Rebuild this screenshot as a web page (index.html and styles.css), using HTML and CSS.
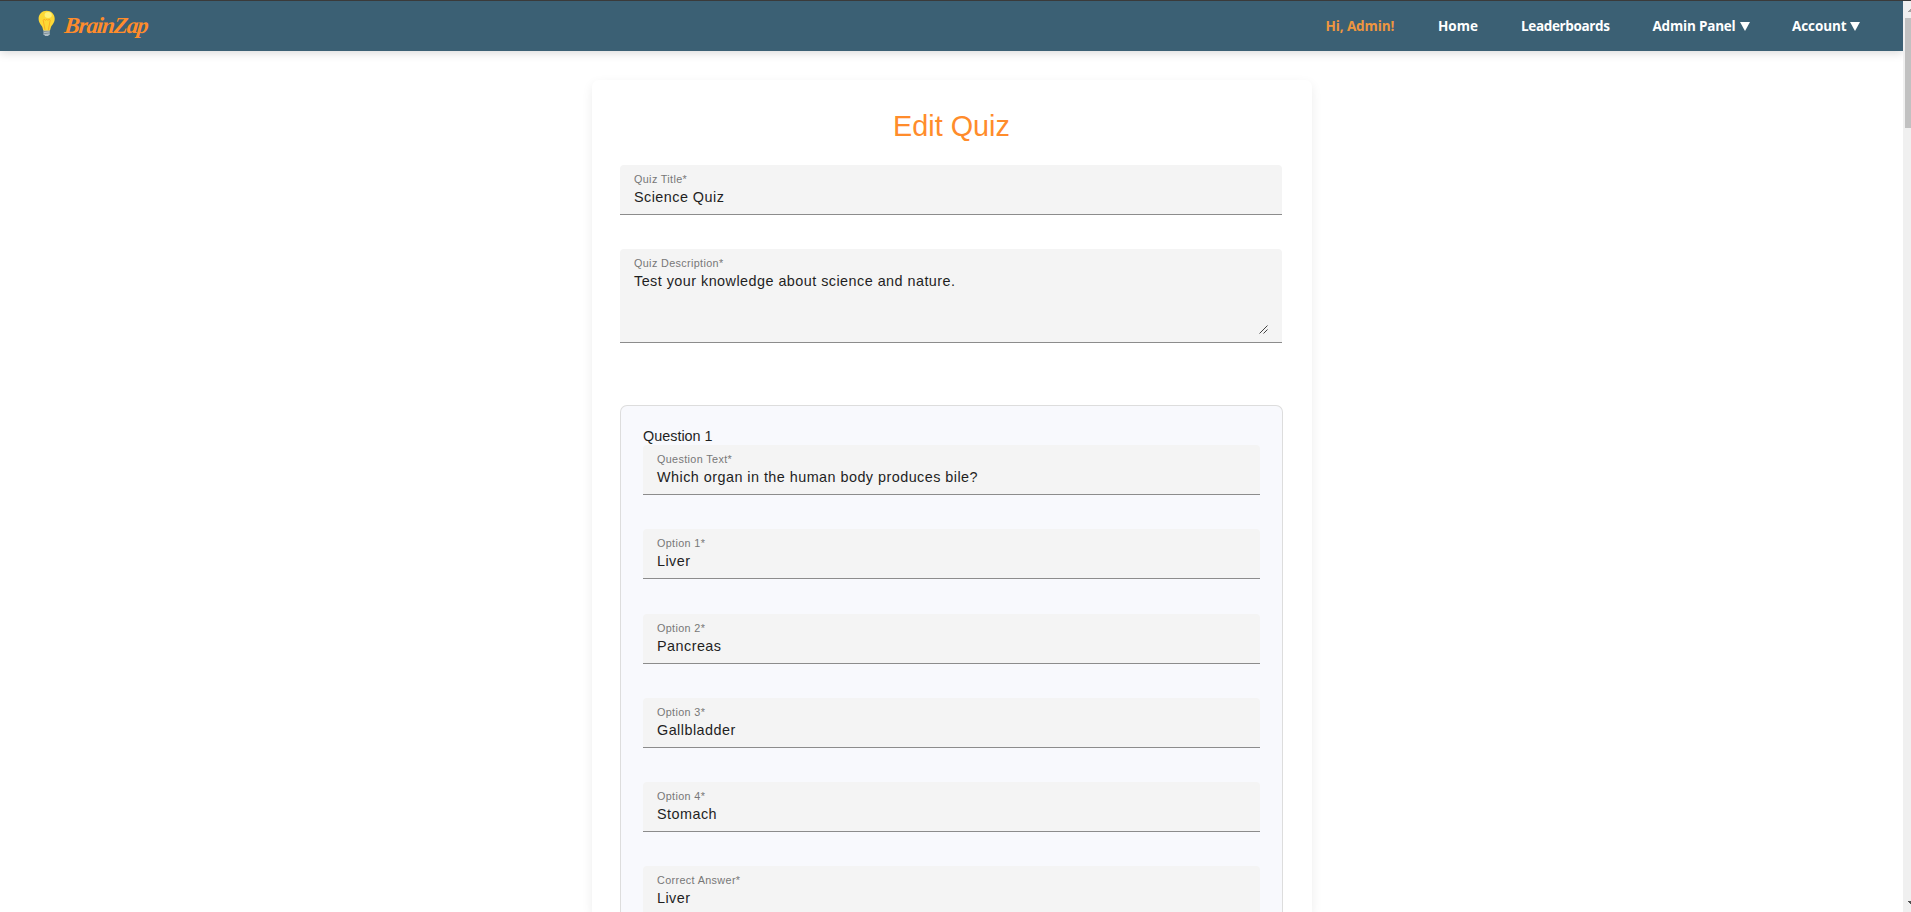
FILE: index.html
```html
<!DOCTYPE html>
<html lang="en">
<head>
<meta charset="utf-8">
<title>BrainZap</title>
<link rel="stylesheet" href="styles.css">
</head>
<body>
<header class="navbar">
  <a class="brand">
    <svg class="bulb" width="18" height="27" viewBox="0 0 18 27">
      <path d="M5.5 20h6.2v4.2l-1.6 1.8H7.2l-1.7-1.8z" fill="#b0bec5"/>
      <path d="M5.5 21.6l6.2-.8M5.5 23.8l6.2-.9" stroke="#75858d" stroke-width=".8"/>
      <path d="M8.6.8C4.100.8.600 4.200.600 8.700c0 4.300 2.500 5.800 3.600 8 .7 1.400.7 3.800 1.600 3.900h5.700c.9-.1.900-2.500 1.600-3.900 1.100-2.200 3.600-3.700 3.600-8C16.700 4.200 13.100.8 8.600.8z" fill="#fdd835"/>
      <path d="M7 19.800L5.200 10.200c.5-1.200 1.700-1 2.200.2.500-1.200 2-1.200 2.500 0 .5-1.200 1.800-1.400 2.300-.2L10.400 19.800" fill="none" stroke="#f9a820" stroke-width=".9"/>
      <ellipse cx="10.200" cy="5" rx="3.600" ry="3" fill="#fff27a"/>
    </svg>
    <span class="brand-name">BrainZap</span>
  </a>
  <nav class="links">
    <a class="link greeting">Hi, Admin!</a>
    <a class="link home">Home</a>
    <a class="link boards">Leaderboards</a>
    <a class="link admin">Admin Panel<i class="caret"></i></a>
    <a class="link account">Account<i class="caret"></i></a>
  </nav>
</header>
<div class="scrollbar">
  <svg width="3" height="3" viewBox="0 0 3 3"><path d="M2 0h1v3H0V2h1V1h1z" fill="#a3a3a3"/></svg>
  <div class="thumb"></div>
  <svg class="down" width="3" height="3" viewBox="0 0 3 3"><path d="M0 0h3v3H2V2H1V1H0z" fill="#505050"/></svg>
</div>
<main class="card">
  <h1>Edit Quiz</h1>
  <div class="field"><label>Quiz Title*</label><div class="value">Science Quiz</div></div>
  <div class="field area"><label>Quiz Description*</label><div class="value">Test your knowledge about science and nature.</div>
    <svg class="grip" width="9" height="9" viewBox="0 0 9 9"><path d="M.5 8.500l8-8M4.500 8.500l4-4" stroke="#444" stroke-width="1"/></svg>
  </div>
  <section class="question">
    <h2>Question 1</h2>
    <div class="field"><label>Question Text*</label><div class="value">Which organ in the human body produces bile?</div></div>
    <div class="field second"><label>Option 1*</label><div class="value">Liver</div></div>
    <div class="field"><label>Option 2*</label><div class="value">Pancreas</div></div>
    <div class="field"><label>Option 3*</label><div class="value">Gallbladder</div></div>
    <div class="field"><label>Option 4*</label><div class="value">Stomach</div></div>
    <div class="field last"><label>Correct Answer*</label><div class="value">Liver</div></div>
  </section>
</main>
</body>
</html>
```
FILE: styles.css
```css
* { box-sizing: border-box; }
html { height: 100%; overflow: hidden; }
body {
  margin: 0;
  height: 100vh;
  overflow: hidden;
  background: #fff;
  color: #1f1f1f;
  font-family: Arial, "Liberation Sans", sans-serif;
  border-top: 1px solid #3a3a3a;
}
.navbar {
  width: 1903px;
  height: 50px;
  background: #3b6074;
  box-shadow: 0 2px 9px rgba(0, 0, 0, .15);
  display: flex;
  justify-content: space-between;
}
.brand { display: flex; padding-left: 37.500px; }
.bulb { margin-top: 9px; }
.brand-name {
  margin: 10px 0 0 8px;
  color: #ff8c2b;
  font: italic bold 23px/30px "Brush Script MT", "Liberation Serif", serif;
  letter-spacing: -1.100px;
  transform: skewX(-6deg);
}
.links { display: flex; padding-right: 42px; }
.link {
  color: #fff;
  font: 700 13.500px/50px "Segoe UI", "Open Sans", sans-serif;
  letter-spacing: -.1px;
  white-space: nowrap;
}
.greeting { width: 112.500px; color: #ee963f; }
.home { width: 83px; letter-spacing: 0; }
.boards { width: 131.500px; letter-spacing: -.35px; }
.admin { width: 139.500px; letter-spacing: -.2px; }
.account { width: 69px; }
.caret {
  display: inline-block;
  margin-left: 4px;
  border: 5px solid transparent;
  border-top: 9px solid #fff;
  border-bottom: 0;
}
.scrollbar {
  position: absolute;
  top: 1px;
  right: 0;
  bottom: 0;
  width: 8px;
  background: #f0f0f0;
  display: flex;
  flex-direction: column;
  align-items: flex-end;
  padding: 8px 0;
}
.thumb { width: 6px; height: 110px; margin-top: 6px; background: #c1c1c1; }
.down { margin-top: auto; }
.card {
  width: 720px;
  height: 832px;
  margin: 29px 0 0 592px;
  padding: 28px 29px 0 28px;
  border-radius: 7px 7px 0 0;
  box-shadow: 0 4px 11px rgba(0, 0, 0, .08);
}
h1 {
  margin: 0 0 20px;
  color: #ff8c2b;
  font-size: 28.800px;
  font-weight: 400;
  line-height: 36px;
  height: 37px;
  text-align: center;
}
.field {
  width: 662px;
  height: 50px;
  margin-bottom: 34px;
  padding: 7px 14px 0;
  border-bottom: 1px solid #8c8c8c;
  border-radius: 4px 4px 0 0;
  background: #f4f4f4;
}
.field label {
  display: block;
  color: #777;
  font-size: 10.800px;
  line-height: 14px;
  letter-spacing: .36px;
}
.value { font-size: 14.400px; line-height: 22px; letter-spacing: .46px; }
.area { position: relative; height: 94px; margin-bottom: 62px; }
.grip { position: absolute; right: 14px; bottom: 8px; }
.question {
  width: 663px;
  height: 507px;
  padding: 21px 22px 0;
  border: 1px solid #ddd;
  border-bottom: 0;
  border-radius: 7px 7px 0 0;
  background: #f8f9fd;
}
.question .field { width: 617px; }
.question .second { margin-bottom: 35px; }
.question .last { height: 46px; margin-bottom: 0; border-bottom: 0; }
h2 { margin: 0; font-size: 14.400px; font-weight: 400; line-height: 18px; }
```
